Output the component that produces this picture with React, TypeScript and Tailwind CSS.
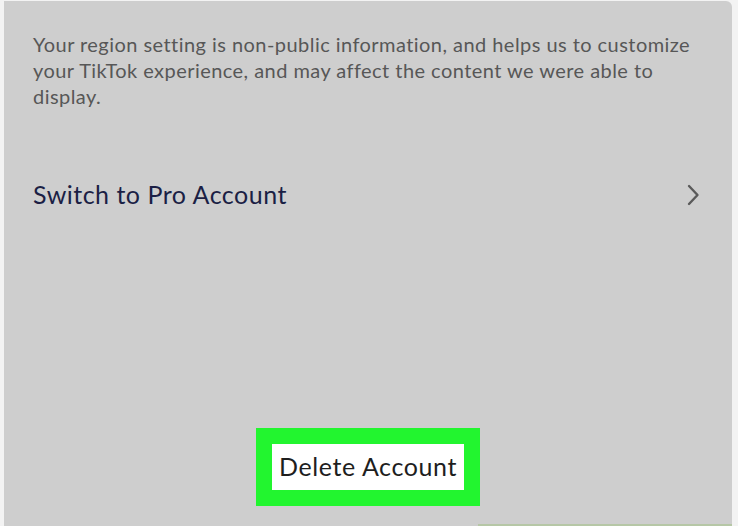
export default function App() {
  return (
    <div className="w-[738px] h-[526px] bg-[#f3f3f3] overflow-hidden font-['Lato',sans-serif]">
      <div className="relative ml-[4px] mt-[1px] w-[728px] h-[525px] bg-[#cecece] rounded-tr-[6px] flex flex-col">
        <p className="pl-[29px] pr-[30px] pt-[30px] text-[20px] leading-[26px] text-[#575757] tracking-[0.45px]">
          Your region setting is non-public information, and helps us to customize your TikTok experience, and may affect
          the content we were able to display.
        </p>

        <div className="mt-[56px] h-[60px] pl-[29px] pr-[32px] flex items-center justify-between">
          <span className="text-[25px] text-[#1b1f45] tracking-[0.5px]">Switch to Pro Account</span>
          <svg width="14" height="24" viewBox="0 0 14 24" fill="none">
            <path d="M3 3l8.5 9L3 21" stroke="#5a5a5a" strokeWidth="2.4" strokeLinecap="round" strokeLinejoin="round" />
          </svg>
        </div>

        <div className="mt-[203px] flex justify-center">
          <div className="w-[224px] h-[78px] bg-[#22f52f] p-[16px]">
            <div className="w-full h-full bg-white flex items-center justify-center">
              <span className="text-[25px] text-[#1e1e1e] tracking-[0.6px]">Delete Account</span>
            </div>
          </div>
        </div>

        <div className="absolute bottom-0 right-0 w-[254px] h-[2px] bg-[#b6c7a6]" />
      </div>
    </div>
  );
}
